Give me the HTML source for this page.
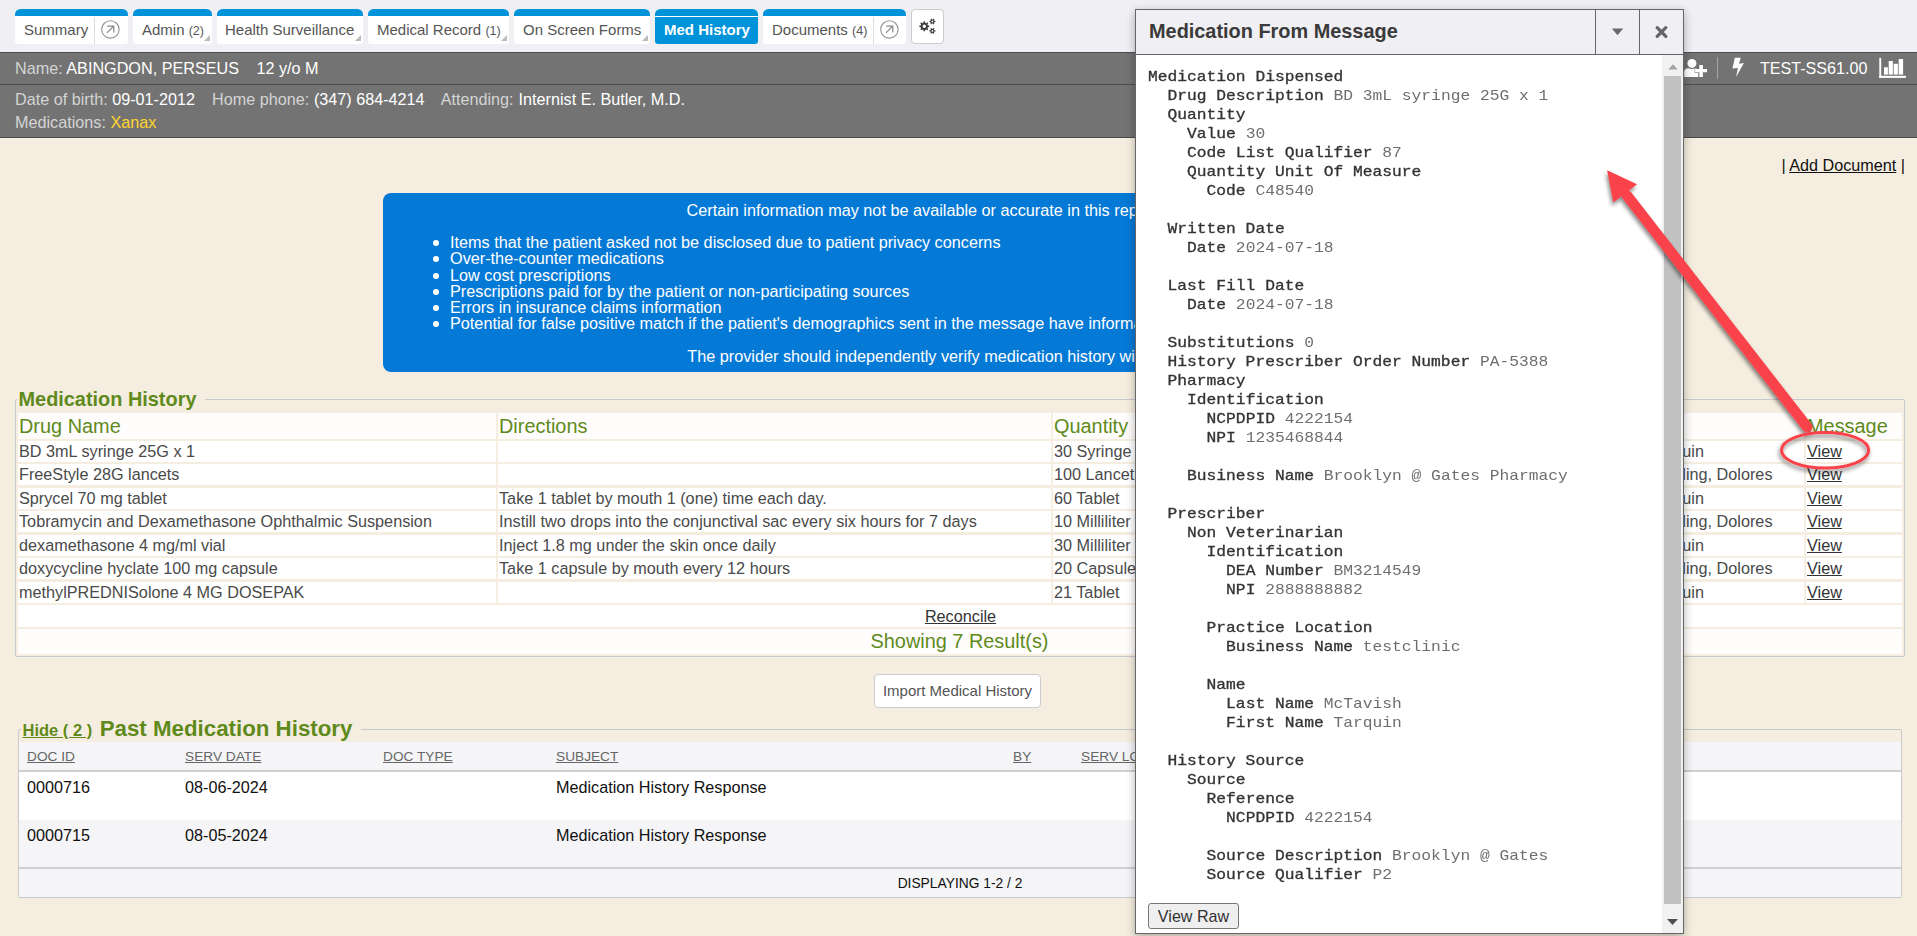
<!DOCTYPE html>
<html>
<head>
<meta charset="utf-8">
<title>Med History</title>
<style>
*{box-sizing:border-box;}
html,body{margin:0;padding:0;}
body{width:1917px;height:936px;overflow:hidden;background:#f5eee0;font-family:"Liberation Sans",sans-serif;font-size:16.15px;color:#333;position:relative;}
.abs{position:absolute;}
a{color:inherit;}
/* top bar */
#topbar{left:0;top:0;width:1917px;height:52px;background:#efeff4;}
#topline{left:0;top:52px;width:1917px;height:1px;background:#4d4d4d;}
.tab{position:absolute;top:9px;height:35px;background:#fff;border-top:7px solid #0093d9;border-radius:5.5px 5.5px 3px 3px;font-size:15px;color:#555;line-height:27px;white-space:nowrap;overflow:hidden;}
.tab .t{position:absolute;top:0;left:9px;}
.tab small{font-size:12.5px;}
.tab .corner{position:absolute;right:2px;bottom:3px;width:0;height:0;border-left:6px solid transparent;border-bottom:6px solid #bbb;}
.tab .div{position:absolute;top:1px;bottom:0;width:1px;background:#ddd;}
.tab.active{background:#0093d9;color:#fff;font-weight:bold;}
.tab.active:before{content:"";position:absolute;left:0;right:0;top:0;height:1px;background:#fff;}
/* patient header */
#phead{left:0;top:53px;width:1917px;height:85px;background:#737373;border-bottom:1px solid #4a4a4a;}
#pdiv{left:0;top:84px;width:1917px;height:1px;background:#4d4d4d;}
.pl{position:absolute;left:15px;white-space:nowrap;color:#fff;font-size:16.2px;line-height:20px;}
.pl i{font-style:normal;color:#d4d4d4;}
/* blue box */
#bluebox{left:383px;top:193px;width:1151px;height:179px;background:#0579d6;border-radius:8px;color:#fff;font-size:16.24px;}
#bluebox .c{position:absolute;white-space:nowrap;line-height:20px;}
#bluebox .li{position:absolute;left:67px;white-space:nowrap;line-height:18px;}
#bluebox .li:before{content:"";position:absolute;left:-17px;top:7px;width:6px;height:6px;border-radius:50%;background:#fff;}
/* fieldsets */
.fs{position:absolute;border:1px solid #c8c9cd;border-radius:2px;}
.lg{position:absolute;background:#f5eee0;color:#5f8a1b;font-weight:bold;white-space:nowrap;}
.cell{position:absolute;background:#fff;white-space:nowrap;overflow:hidden;color:#4a4a4a;font-size:16.23px;line-height:21px;padding-left:1px;}
.hcell{position:absolute;background:#fefdfb;white-space:nowrap;overflow:hidden;color:#5f8a1b;font-size:19.9px;line-height:27px;padding-left:1px;}
.cell a{color:#333;text-decoration:underline;}
/* past table */
.ph{position:absolute;font-size:13.7px;color:#666;text-decoration:underline;white-space:nowrap;line-height:16px;}
.pc{position:absolute;font-size:16.22px;color:#111;white-space:nowrap;line-height:20px;}
/* dialog */
#dlg{left:1135px;top:9px;width:549px;height:925px;border:1px solid #666;background:#fff;box-shadow:0 3px 9px rgba(0,0,0,.3);}
#dlgtitle{left:0;top:0;width:547px;height:45px;background:#efeff4;border-bottom:1px solid #666;}
#dlgtitle .tt{position:absolute;left:13px;top:9px;font-weight:bold;font-size:19.9px;color:#3a3a3a;line-height:24px;white-space:nowrap;}
#dlgtitle .vd{position:absolute;top:0;width:1px;height:44px;background:#666;}
pre#msg{position:absolute;left:12px;top:58px;margin:0;font-family:"Liberation Mono",monospace;font-size:14.2px;line-height:19px;color:#6e6e6e;transform-origin:0 0;transform:scaleX(1.1466);}
pre#msg b{color:#333;font-weight:normal;-webkit-text-stroke:0.3px #333;}
#sbtrack{left:526px;top:45px;width:21px;height:878px;background:#f1f1f1;}
#sbthumb{left:528px;top:66px;width:17px;height:828px;background:#c1c1c1;}
#viewraw{left:12px;top:893px;width:91px;height:26px;border:1px solid #767676;border-radius:3px;background:#efefef;font-size:16.1px;color:#333;text-align:center;line-height:25px;}
</style>
</head>
<body>
<div id="topbar" class="abs"></div>
<div id="topline" class="abs"></div>

<!-- tabs -->
<div class="tab" style="left:15px;width:113px;"><span class="t">Summary</span><span class="div" style="left:79px"></span>
<svg class="abs" style="left:85px;top:3px" width="22" height="22" viewBox="0 0 22 22"><circle cx="10.4" cy="10.4" r="8.7" fill="none" stroke="#949494" stroke-width="1.15"/><path d="M6.9 13.9 L13.6 7.2 M7.2 7 H13.8 V13.6" fill="none" stroke="#8c8c8c" stroke-width="1.25"/></svg></div>
<div class="tab" style="left:133px;width:79px;"><span class="t">Admin <small>(2)</small></span><span class="corner"></span></div>
<div class="tab" style="left:217px;width:146px;"><span class="t" style="left:8px">Health Surveillance</span><span class="corner"></span></div>
<div class="tab" style="left:368px;width:141px;"><span class="t">Medical Record <small>(1)</small></span><span class="corner"></span></div>
<div class="tab" style="left:514px;width:136px;"><span class="t">On Screen Forms</span><span class="corner"></span></div>
<div class="tab active" style="left:655px;width:103px;"><span class="t">Med History</span></div>
<div class="tab" style="left:763px;width:143px;"><span class="t">Documents <small>(4)</small></span><span class="div" style="left:110px"></span>
<svg class="abs" style="left:116px;top:3px" width="22" height="22" viewBox="0 0 22 22"><circle cx="10.4" cy="10.4" r="8.7" fill="none" stroke="#949494" stroke-width="1.15"/><path d="M6.9 13.9 L13.6 7.2 M7.2 7 H13.8 V13.6" fill="none" stroke="#8c8c8c" stroke-width="1.25"/></svg></div>
<div class="abs" style="left:911px;top:9px;width:33px;height:35px;background:#fff;border:1px solid #ccc;border-radius:4px;">
<svg class="abs" style="left:7px;top:8px" width="18" height="17" viewBox="0 0 18 17"><path fill="#3d3d3d" fill-rule="evenodd" d="M8.90 7.44 L10.25 7.60 L10.25 9.00 L8.90 9.16 L8.45 10.23 L9.30 11.30 L8.30 12.30 L7.23 11.45 L6.16 11.90 L6.00 13.25 L4.60 13.25 L4.44 11.90 L3.37 11.45 L2.30 12.30 L1.30 11.30 L2.15 10.23 L1.70 9.16 L0.35 9.00 L0.35 7.60 L1.70 7.44 L2.15 6.37 L1.30 5.30 L2.30 4.30 L3.37 5.15 L4.44 4.70 L4.60 3.35 L6.00 3.35 L6.16 4.70 L7.23 5.15 L8.30 4.30 L9.30 5.30 L8.45 6.37 Z M7.00 8.30 A1.7 1.7 0 1 0 3.60 8.30 A1.7 1.7 0 1 0 7.00 8.30 Z M15.40 2.85 L16.45 2.92 L16.45 4.08 L15.40 4.15 L14.96 4.91 L15.43 5.85 L14.42 6.43 L13.84 5.55 L12.96 5.55 L12.38 6.43 L11.37 5.85 L11.84 4.91 L11.40 4.15 L10.35 4.08 L10.35 2.92 L11.40 2.85 L11.84 2.09 L11.37 1.15 L12.38 0.57 L12.96 1.45 L13.84 1.45 L14.42 0.57 L15.43 1.15 L14.96 2.09 Z M14.30 3.50 A0.9 0.9 0 1 0 12.50 3.50 A0.9 0.9 0 1 0 14.30 3.50 Z M15.40 12.25 L16.45 12.32 L16.45 13.48 L15.40 13.55 L14.96 14.31 L15.43 15.25 L14.42 15.83 L13.84 14.95 L12.96 14.95 L12.38 15.83 L11.37 15.25 L11.84 14.31 L11.40 13.55 L10.35 13.48 L10.35 12.32 L11.40 12.25 L11.84 11.49 L11.37 10.55 L12.38 9.97 L12.96 10.85 L13.84 10.85 L14.42 9.97 L15.43 10.55 L14.96 11.49 Z M14.30 12.90 A0.9 0.9 0 1 0 12.50 12.90 A0.9 0.9 0 1 0 14.30 12.90 Z"/></svg></div>

<!-- patient header -->
<div id="phead" class="abs"></div>
<div id="pdiv" class="abs"></div>
<div class="pl" style="top:58px;"><i>Name:</i> ABINGDON, PERSEUS</div><div class="pl" style="top:58px;left:256.4px">12 y/o M</div>
<div class="pl" style="top:89px;"><i>Date of birth:</i> 09-01-2012</div><div class="pl" style="top:89px;left:212px"><i>Home phone:</i></div><div class="pl" style="top:89px;left:313.9px">(347) 684-4214</div><div class="pl" style="top:89px;left:440.7px"><i>Attending:</i></div><div class="pl" style="top:89px;left:518.6px">Internist E. Butler, M.D.</div>
<div class="pl" style="top:112px;"><i>Medications:</i> <span style="color:#ffd52e">Xanax</span></div>

<!-- header right icons -->
<svg class="abs" style="left:1684px;top:57px" width="24" height="21" viewBox="0 0 24 21"><g fill="#fff"><circle cx="7.9" cy="6.4" r="4.5"/><path d="M0.2 19.9 V15.2 Q0.2 11.2 4.4 11.2 Q7.9 12.6 11.2 11.2 Q14.3 11.2 14.3 15.2 V19.9 Z"/><path d="M10.6 11.4 H14.8 V7.4 H19.4 V11.4 H23.6 V15.8 H19.4 V20.4 H14.8 V15.8 H10.6 Z" fill="#737373"/><path d="M11.1 11.9 H15.3 V7.9 H18.9 V11.9 H23.1 V15.3 H18.9 V19.9 H15.3 V15.3 H11.1 Z"/></g></svg>
<div class="abs" style="left:1717px;top:57px;width:1px;height:22px;background:#a5a5a5;"></div>
<svg class="abs" style="left:1731px;top:57px" width="14" height="21" viewBox="0 0 14 21"><path d="M3.8 0.8 L9.8 0.8 L7.9 6.8 L12.9 6.0 L5.1 20.1 L6.9 11 L1.4 11.5 Z" fill="#fff"/></svg>
<div class="abs" style="left:1760px;top:58px;color:#fff;font-size:16.1px;line-height:20px;white-space:nowrap;">TEST-SS61.00</div>
<svg class="abs" style="left:1878px;top:57px" width="29" height="22" viewBox="0 0 29 22"><g fill="#fff"><rect x="1.3" y="0.9" width="1.9" height="20"/><rect x="1.2" y="18.8" width="26.8" height="2.1"/><rect x="6" y="10.3" width="3.9" height="7.3"/><rect x="10.7" y="4" width="4.2" height="13.6"/><rect x="15.7" y="6.8" width="4.2" height="10.8"/><rect x="20.7" y="2" width="4.4" height="15.6"/></g></svg>

<!-- add document -->
<div class="abs" style="right:12px;top:155px;color:#111;font-size:16.2px;line-height:20px;white-space:nowrap;">| <a style="text-decoration:underline">Add Document</a> |</div>

<!-- blue box -->
<div id="bluebox" class="abs">
<div class="c" style="top:7px;left:303.5px">Certain information may not be available or accurate in this report, including:</div>
<div class="li" style="top:40px">Items that the patient asked not be disclosed due to patient privacy concerns</div>
<div class="li" style="top:56px">Over-the-counter medications</div>
<div class="li" style="top:73px">Low cost prescriptions</div>
<div class="li" style="top:89px">Prescriptions paid for by the patient or non-participating sources</div>
<div class="li" style="top:105px">Errors in insurance claims information</div>
<div class="li" style="top:121px">Potential for false positive match if the patient's demographics sent in the message have information</div>
<div class="c" style="top:153px;left:304.3px">The provider should independently verify medication history with the patient.</div>
</div>

<!-- medication history -->
<div class="fs" style="left:15px;top:399px;width:1890px;height:258px;"></div>
<div class="lg" style="left:16.5px;top:386px;font-size:19.9px;line-height:26px;padding:0 9px 0 2px;">Medication History</div>
<div id="mh">
<div class="hcell" style="left:18px;top:413px;width:478px;height:25.6px">Drug Name</div>
<div class="hcell" style="left:498px;top:413px;width:553px;height:25.6px">Directions</div>
<div class="hcell" style="left:1053px;top:413px;width:149px;height:25.6px">Quantity</div>
<div class="hcell" style="left:1204px;top:413px;width:150px;height:25.6px">Days Supply</div>
<div class="hcell" style="left:1356px;top:413px;width:150px;height:25.6px">Last Fill</div>
<div class="hcell" style="left:1508px;top:413px;width:296px;height:25.6px">Prescriber</div>
<div class="hcell" style="left:1806px;top:413px;width:96px;height:25.6px">Message</div>
<div class="cell" style="left:18px;top:440.8px;width:478px;height:21px">BD 3mL syringe 25G x 1</div>
<div class="cell" style="left:498px;top:440.8px;width:553px;height:21px"></div>
<div class="cell" style="left:1053px;top:440.8px;width:149px;height:21px">30 Syringe</div>
<div class="cell" style="left:1204px;top:440.8px;width:150px;height:21px"></div>
<div class="cell" style="left:1356px;top:440.8px;width:150px;height:21px"></div>
<div class="cell" style="left:1508px;top:440.8px;width:296px;height:21px"><span style="position:absolute;right:100px;top:0">McTavish, Tarquin</span></div>
<div class="cell" style="left:1806px;top:440.8px;width:96px;height:21px"><a>View</a></div>
<div class="cell" style="left:18px;top:464.32px;width:478px;height:21px">FreeStyle 28G lancets</div>
<div class="cell" style="left:498px;top:464.32px;width:553px;height:21px"></div>
<div class="cell" style="left:1053px;top:464.32px;width:149px;height:21px">100 Lancet</div>
<div class="cell" style="left:1204px;top:464.32px;width:150px;height:21px"></div>
<div class="cell" style="left:1356px;top:464.32px;width:150px;height:21px"></div>
<div class="cell" style="left:1508px;top:464.32px;width:296px;height:21px"><span style="position:absolute;right:31.5px;top:0">Easterling, Dolores</span></div>
<div class="cell" style="left:1806px;top:464.32px;width:96px;height:21px"><a>View</a></div>
<div class="cell" style="left:18px;top:487.84px;width:478px;height:21px">Sprycel 70 mg tablet</div>
<div class="cell" style="left:498px;top:487.84px;width:553px;height:21px">Take 1 tablet by mouth 1 (one) time each day.</div>
<div class="cell" style="left:1053px;top:487.84px;width:149px;height:21px">60 Tablet</div>
<div class="cell" style="left:1204px;top:487.84px;width:150px;height:21px"></div>
<div class="cell" style="left:1356px;top:487.84px;width:150px;height:21px"></div>
<div class="cell" style="left:1508px;top:487.84px;width:296px;height:21px"><span style="position:absolute;right:100px;top:0">McTavish, Tarquin</span></div>
<div class="cell" style="left:1806px;top:487.84px;width:96px;height:21px"><a>View</a></div>
<div class="cell" style="left:18px;top:511.36px;width:478px;height:21px">Tobramycin and Dexamethasone Ophthalmic Suspension</div>
<div class="cell" style="left:498px;top:511.36px;width:553px;height:21px">Instill two drops into the conjunctival sac every six hours for 7 days</div>
<div class="cell" style="left:1053px;top:511.36px;width:149px;height:21px">10 Milliliter</div>
<div class="cell" style="left:1204px;top:511.36px;width:150px;height:21px"></div>
<div class="cell" style="left:1356px;top:511.36px;width:150px;height:21px"></div>
<div class="cell" style="left:1508px;top:511.36px;width:296px;height:21px"><span style="position:absolute;right:31.5px;top:0">Easterling, Dolores</span></div>
<div class="cell" style="left:1806px;top:511.36px;width:96px;height:21px"><a>View</a></div>
<div class="cell" style="left:18px;top:534.88px;width:478px;height:21px">dexamethasone 4 mg/ml vial</div>
<div class="cell" style="left:498px;top:534.88px;width:553px;height:21px">Inject 1.8 mg under the skin once daily</div>
<div class="cell" style="left:1053px;top:534.88px;width:149px;height:21px">30 Milliliter</div>
<div class="cell" style="left:1204px;top:534.88px;width:150px;height:21px"></div>
<div class="cell" style="left:1356px;top:534.88px;width:150px;height:21px"></div>
<div class="cell" style="left:1508px;top:534.88px;width:296px;height:21px"><span style="position:absolute;right:100px;top:0">McTavish, Tarquin</span></div>
<div class="cell" style="left:1806px;top:534.88px;width:96px;height:21px"><a>View</a></div>
<div class="cell" style="left:18px;top:558.4px;width:478px;height:21px">doxycycline hyclate 100 mg capsule</div>
<div class="cell" style="left:498px;top:558.4px;width:553px;height:21px">Take 1 capsule by mouth every 12 hours</div>
<div class="cell" style="left:1053px;top:558.4px;width:149px;height:21px">20 Capsule</div>
<div class="cell" style="left:1204px;top:558.4px;width:150px;height:21px"></div>
<div class="cell" style="left:1356px;top:558.4px;width:150px;height:21px"></div>
<div class="cell" style="left:1508px;top:558.4px;width:296px;height:21px"><span style="position:absolute;right:31.5px;top:0">Easterling, Dolores</span></div>
<div class="cell" style="left:1806px;top:558.4px;width:96px;height:21px"><a>View</a></div>
<div class="cell" style="left:18px;top:581.92px;width:478px;height:21px">methylPREDNISolone 4 MG DOSEPAK</div>
<div class="cell" style="left:498px;top:581.92px;width:553px;height:21px"></div>
<div class="cell" style="left:1053px;top:581.92px;width:149px;height:21px">21 Tablet</div>
<div class="cell" style="left:1204px;top:581.92px;width:150px;height:21px"></div>
<div class="cell" style="left:1356px;top:581.92px;width:150px;height:21px"></div>
<div class="cell" style="left:1508px;top:581.92px;width:296px;height:21px"><span style="position:absolute;right:100px;top:0">McTavish, Tarquin</span></div>
<div class="cell" style="left:1806px;top:581.92px;width:96px;height:21px"><a>View</a></div>
<div class="cell" style="left:18px;top:605.44px;width:1884px;height:21.7px;line-height:22px;text-align:center;background:#fff"><a>Reconcile</a></div>
<div class="hcell" style="left:18px;top:628.96px;width:1884px;height:25.5px;line-height:25px;text-align:center;padding-left:0;text-indent:-1px">Showing 7 Result(s)</div>
</div>

<!-- import button -->
<div class="abs" style="left:874px;top:674px;width:167px;height:34px;background:#fff;border:1px solid #ccc;border-radius:4px;color:#555;font-size:15px;line-height:32px;text-align:center;">Import Medical History</div>

<!-- past medication history -->
<div class="fs" style="left:18px;top:729px;width:1884px;height:169px;"></div>
<div class="lg" style="left:20.5px;top:715px;padding:0 9px 0 2px;line-height:28px;"><span style="font-size:16.5px;text-decoration:underline;">Hide ( 2 )</span> <span style="font-size:22.3px;margin-left:3px;">Past Medication History</span></div>
<div class="abs" style="left:19px;top:742px;width:1882px;height:28px;background:#f5f5f7;"></div>
<div class="abs" style="left:19px;top:770px;width:1882px;height:2px;background:#cfcfd2;"></div>
<div class="abs" style="left:19px;top:772px;width:1882px;height:48px;background:#fff;"></div>
<div class="abs" style="left:19px;top:820px;width:1882px;height:47px;background:#f5f5f7;"></div>
<div class="abs" style="left:19px;top:867px;width:1882px;height:2px;background:#cfcfd2;"></div>
<div class="abs" style="left:19px;top:869px;width:1882px;height:28px;background:#f5f5f7;"></div>
<div class="ph" style="left:27px;top:749px;">DOC ID</div>
<div class="ph" style="left:185px;top:749px;">SERV DATE</div>
<div class="ph" style="left:383px;top:749px;">DOC TYPE</div>
<div class="ph" style="left:556px;top:749px;">SUBJECT</div>
<div class="ph" style="left:1013px;top:749px;">BY</div>
<div class="ph" style="left:1081px;top:749px;">SERV LOC</div>
<div class="pc" style="left:27px;top:777px;">0000716</div>
<div class="pc" style="left:185px;top:777px;">08-06-2024</div>
<div class="pc" style="left:556px;top:777px;">Medication History Response</div>
<div class="pc" style="left:27px;top:825px;">0000715</div>
<div class="pc" style="left:185px;top:825px;">08-05-2024</div>
<div class="pc" style="left:556px;top:825px;">Medication History Response</div>
<div class="abs" style="left:19px;top:876px;width:1882px;text-align:center;font-size:13.8px;color:#111;line-height:16px;">DISPLAYING 1-2 / 2</div>

<!-- dialog -->
<div id="dlg" class="abs">
<div id="dlgtitle" class="abs"><span class="tt">Medication From Message</span><span class="vd" style="left:459px"></span><span class="vd" style="left:503px"></span>
<svg class="abs" style="left:475px;top:18px" width="13" height="8" viewBox="0 0 13 8"><path d="M0.8 0.4 H12.2 L6.5 7.2 Z" fill="#6a6a6a"/></svg>
<svg class="abs" style="left:518px;top:15px" width="15" height="14" viewBox="0 0 15 14"><path d="M3.2 2.7 L11.8 11.3 M11.8 2.7 L3.2 11.3" stroke="#666" stroke-width="3.3" stroke-linecap="round" fill="none"/></svg>
</div>
<div id="sbtrack" class="abs"></div>
<div id="sbthumb" class="abs"></div>
<svg class="abs" style="left:531.5px;top:54px" width="10" height="6" viewBox="0 0 10 6"><path d="M0.3 5.4 L5 0.2 L9.7 5.4 Z" fill="#a3a3a3"/></svg>
<svg class="abs" style="left:531px;top:908.5px" width="11" height="6" viewBox="0 0 11 6"><path d="M0 0 L5.5 6 L11 0 Z" fill="#505050"/></svg>
<pre id="msg"><b>Medication Dispensed</b>
  <b>Drug Description</b> BD 3mL syringe 25G x 1
  <b>Quantity</b>
    <b>Value</b> 30
    <b>Code List Qualifier</b> 87
    <b>Quantity Unit Of Measure</b>
      <b>Code</b> C48540

  <b>Written Date</b>
    <b>Date</b> 2024-07-18

  <b>Last Fill Date</b>
    <b>Date</b> 2024-07-18

  <b>Substitutions</b> 0
  <b>History Prescriber Order Number</b> PA-5388
  <b>Pharmacy</b>
    <b>Identification</b>
      <b>NCPDPID</b> 4222154
      <b>NPI</b> 1235468844

    <b>Business Name</b> Brooklyn @ Gates Pharmacy

  <b>Prescriber</b>
    <b>Non Veterinarian</b>
      <b>Identification</b>
        <b>DEA Number</b> BM3214549
        <b>NPI</b> 2888888882

      <b>Practice Location</b>
        <b>Business Name</b> testclinic

      <b>Name</b>
        <b>Last Name</b> McTavish
        <b>First Name</b> Tarquin

  <b>History Source</b>
    <b>Source</b>
      <b>Reference</b>
        <b>NCPDPID</b> 4222154

      <b>Source Description</b> Brooklyn @ Gates
      <b>Source Qualifier</b> P2</pre>
<div id="viewraw" class="abs">View Raw</div>
</div>

<!-- annotation -->
<svg class="abs" style="left:0;top:0;pointer-events:none" width="1917" height="936" viewBox="0 0 1917 936">
<defs><filter id="sh" x="-20%" y="-20%" width="140%" height="140%"><feGaussianBlur in="SourceAlpha" stdDeviation="2.2"/><feOffset dx="-1.5" dy="3" result="o"/><feComponentTransfer><feFuncA type="linear" slope="0.5"/></feComponentTransfer><feMerge><feMergeNode/><feMergeNode in="SourceGraphic"/></feMerge></filter></defs>
<g filter="url(#sh)">
<ellipse cx="1825.1" cy="450.2" rx="43.6" ry="17.8" fill="none" stroke="#f9424a" stroke-width="3"/>
<line x1="1627" y1="195.5" x2="1807.2" y2="427" stroke="#f9424a" stroke-width="10.5" stroke-linecap="round"/>
<path d="M1607.1 170.2 L1637 184.2 L1613.3 202.5 Z" fill="#f9424a"/>
</g>
</svg>
</body>
</html>
